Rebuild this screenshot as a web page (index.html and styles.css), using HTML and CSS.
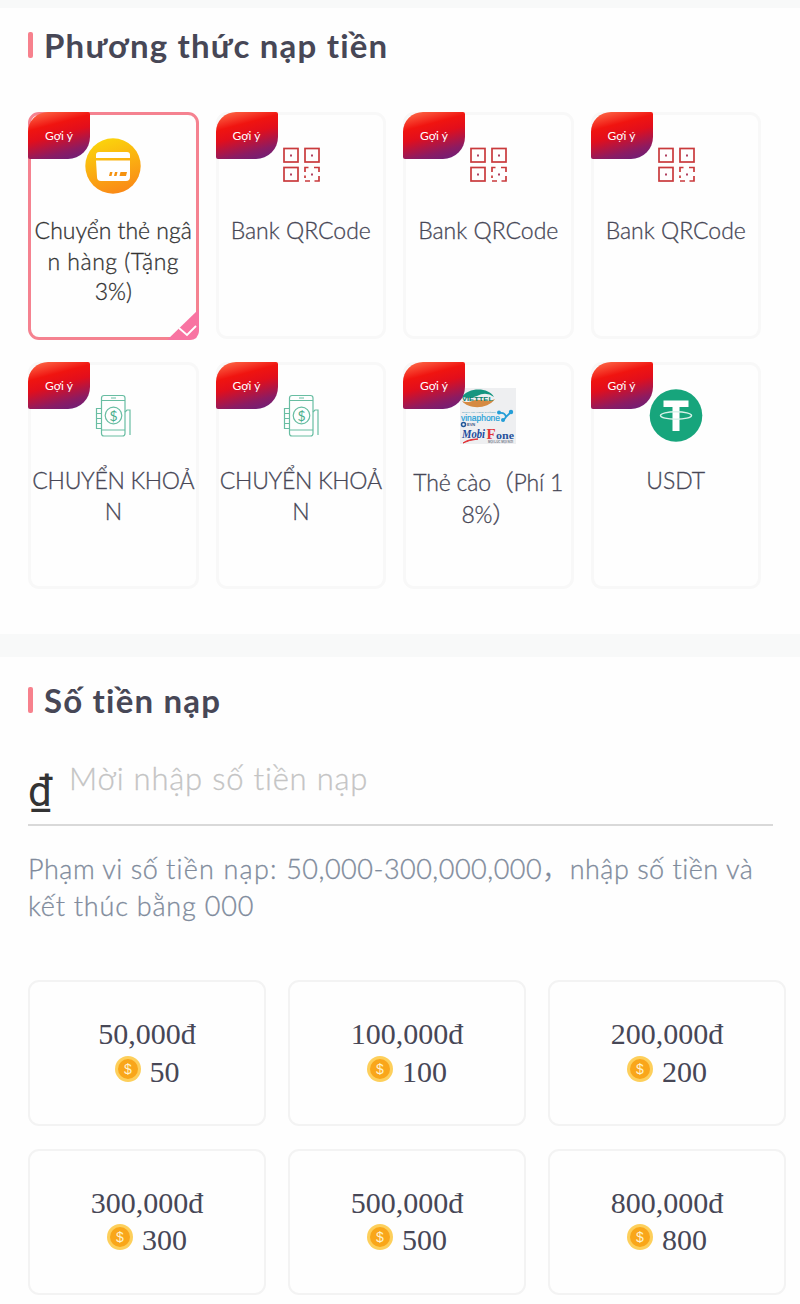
FILE: index.html
```html
<!DOCTYPE html>
<html lang="vi">
  <head>
    <meta charset="UTF-8" />
    <title>Nạp tiền</title>
    <link rel="stylesheet" href="styles.css">
  </head>
  <body>
    <!-- Shared icons -->
    <svg class="sprite" width="0" height="0">
      <symbol id="qr" viewBox="0 0 56 56">
        <g fill="none" stroke="#c93a3c" stroke-width="1.7">
          <rect x="11" y="10.5" width="14" height="13.5" />
          <rect x="32" y="10.5" width="14" height="13.5" />
          <rect x="11" y="29.5" width="14" height="13.5" />
          <path d="M32 34v-4.500h3.500M41 29.500h5v4.500M32 37.500v2.500M32 43h5M41.500 43h4.500v-5" />
        </g>
        <g fill="#b04060">
          <rect x="17" y="16.500" width="2" height="2" />
          <rect x="38" y="16.500" width="2" height="2" />
          <rect x="17" y="35.500" width="2" height="2" />
          <rect x="38" y="35.500" width="2" height="2" />
        </g>
      </symbol>
      <symbol id="phone" viewBox="0 0 56 56">
        <g fill="none" stroke="#68bda2" stroke-width="1.200">
          <rect x="16.500" y="7.500" width="23.500" height="40.500" rx="2.500" />
          <path d="M16.500 12.500H40M16.500 42H40M26 10h5M16.500 20.500h-5v20h5M11.500 25.500h5M11.500 30.500h5M11.500 35.500h5M40 24l2-2h3v25" />
          <circle cx="28.500" cy="27.500" r="8.300" />
        </g>
        <text x="28.500" y="32.500" text-anchor="middle" font-family="Lato, sans-serif" font-size="14" fill="#48ad8b">$</text>
      </symbol>
      <symbol id="coin" viewBox="0 0 26 26">
        <circle cx="13" cy="13" r="13" fill="#fdcf5b" />
        <circle cx="13" cy="13" r="10" fill="#f9a61a" />
        <text x="13" y="18" text-anchor="middle" font-family="Liberation Sans, sans-serif" font-size="14" fill="#fff3cf">$</text>
      </symbol>
    </svg>

    <div class="section methods-section">
      <h2 class="title title-methods">Phương thức nạp tiền</h2>
      <div class="methods">
        <div class="method active">
          <span class="badge">Gợi ý</span>
          <svg class="icon" viewBox="0 0 56 56">
            <defs>
              <linearGradient id="gold" x1="0.300" y1="0" x2="0.600" y2="1">
                <stop offset="0" stop-color="#fbd50c" />
                <stop offset="1" stop-color="#fa8917" />
              </linearGradient>
            </defs>
            <circle cx="28" cy="28" r="27.700" fill="url(#gold)" />
            <path d="M14 14h28q3 0 3 3v3H11v-3q0-3 3-3z" fill="#fff" />
            <path d="M11 22.500h34V39q0 4-4 4H16q-4 0-4-4z" fill="#fff" />
            <path d="M25 34h2.500l-1 4H24zM30 34h2.500l-1 4H29zM35.500 34h6.500l-1 4h-6.500z" fill="#f5920f" />
          </svg>
          <p class="name">Chuyển thẻ ngâ<br><span class="wide">n hàng (Tặng</span><br>3%)</p>
          <svg class="check" viewBox="0 0 32 31">
            <path d="M32 0v21q0 10-10 10H0z" fill="#f874a2" />
            <path d="M12 19l8 7L29 17" fill="none" stroke="#fff" stroke-width="1.800" />
          </svg>
        </div>
        <div class="method">
          <span class="badge">Gợi ý</span>
          <svg class="icon"><use href="#qr" /></svg>
          <p class="name">Bank QRCode</p>
        </div>
        <div class="method">
          <span class="badge">Gợi ý</span>
          <svg class="icon"><use href="#qr" /></svg>
          <p class="name">Bank QRCode</p>
        </div>
        <div class="method">
          <span class="badge">Gợi ý</span>
          <svg class="icon"><use href="#qr" /></svg>
          <p class="name">Bank QRCode</p>
        </div>
        <div class="method">
          <span class="badge">Gợi ý</span>
          <svg class="icon"><use href="#phone" /></svg>
          <p class="name transfer">CHUYỂN KHOẢ<br>N</p>
        </div>
        <div class="method">
          <span class="badge">Gợi ý</span>
          <svg class="icon"><use href="#phone" /></svg>
          <p class="name transfer">CHUYỂN KHOẢ<br>N</p>
        </div>
        <div class="method">
          <span class="badge">Gợi ý</span>
          <svg class="icon" viewBox="0 0 56 56">
            <rect width="56" height="56" fill="#eeeff1" />
            <path d="M2 9C8-1 29-1 34 9q-8-6-17-1-6 3-15 1z" fill="#169680" />
            <path d="M2 13c6 8 25 9 33-2-7 4-13 0-20 1-5 2-8 3-13 1z" fill="#d58a42" />
            <g font-family="Liberation Sans, sans-serif" font-weight="bold">
              <text x="2" y="13" font-size="6" textLength="31" lengthAdjust="spacingAndGlyphs" fill="#087d68">VIETTEL</text>
              <text x="2" y="24.500" font-size="2.500" textLength="34" lengthAdjust="spacingAndGlyphs" fill="#6cadc5">DỊCH VỤ VIỄN THÔNG</text>
              <text x="1" y="32.500" font-size="8.500" font-weight="normal" stroke="#239fd7" stroke-width="0.200" textLength="39" lengthAdjust="spacingAndGlyphs" fill="#239fd7">vinaphone</text>
              <text x="7" y="38" font-size="4" fill="#385987">EVN</text>
              <text x="28" y="55" font-size="3" textLength="25" fill="#777b8c">MỌI LÚC MỌI NƠI</text>
            </g>
            <circle cx="3.500" cy="36.500" r="2" fill="none" stroke="#20579a" stroke-width="1.500" />
            <path d="M39 25q6-1 7 4l6-6M46 29l-3 4" fill="none" stroke="#249ed7" stroke-width="1.800" />
            <circle cx="39" cy="24.500" r="2" fill="#249ed7" />
            <circle cx="51" cy="24" r="2.200" fill="#249ed7" />
            <circle cx="43" cy="32" r="2" fill="#249ed7" />
            <g font-family="Liberation Serif, serif" font-weight="bold">
              <text x="2" y="50" font-size="12.500" font-style="italic" textLength="23" lengthAdjust="spacingAndGlyphs" fill="#20499b">Mobi</text>
              <text x="26.500" y="50.500" font-size="15" fill="#e23438">F</text>
              <text x="36" y="50.500" font-size="11" textLength="18" lengthAdjust="spacingAndGlyphs" fill="#27529c">one</text>
            </g>
            <path d="M3 55q5-4 15-4-9 1-15 4z" fill="#e23438" stroke="#e23438" />
          </svg>
          <p class="name scratch">Thẻ cào（Phí 1<br>8%）</p>
        </div>
        <div class="method">
          <span class="badge">Gợi ý</span>
          <svg class="icon" viewBox="0 0 56 56">
            <circle cx="28" cy="27.500" r="26.300" fill="#17a57c" />
            <path d="M15.500 12.500h25V19h-9v24h-7V19h-9z" fill="#fff" />
            <ellipse cx="28" cy="27.500" rx="15.500" ry="3.700" fill="none" stroke="#d8f1e9" stroke-width="1.500" />
          </svg>
          <p class="name">USDT</p>
        </div>
      </div>
    </div>

    <div class="section">
      <h2 class="title title-amount">Số tiền nạp</h2>
      <div class="field">
        <span class="currency">₫</span>
        <input class="amount-input" type="text" placeholder="Mời nhập số tiền nạp">
      </div>
      <p class="hint">Phạm vi số <span class="hint-wide">tiền nạp: </span>50,000-300,000,000，nhập số tiền và<br><span class="hint-last">kết thúc bằng 000</span></p>
      <div class="amounts">
        <div class="amount">
          <div>50,000đ</div>
          <div class="points"><svg class="coin"><use href="#coin" /></svg>50</div>
        </div>
        <div class="amount">
          <div>100,000đ</div>
          <div class="points"><svg class="coin"><use href="#coin" /></svg>100</div>
        </div>
        <div class="amount">
          <div>200,000đ</div>
          <div class="points"><svg class="coin"><use href="#coin" /></svg>200</div>
        </div>
        <div class="amount">
          <div>300,000đ</div>
          <div class="points"><svg class="coin"><use href="#coin" /></svg>300</div>
        </div>
        <div class="amount">
          <div>500,000đ</div>
          <div class="points"><svg class="coin"><use href="#coin" /></svg>500</div>
        </div>
        <div class="amount">
          <div>800,000đ</div>
          <div class="points"><svg class="coin"><use href="#coin" /></svg>800</div>
        </div>
      </div>
    </div>
  </body>
</html>
```
FILE: styles.css
```css
* {
  box-sizing: border-box;
}
body {
  margin: 0;
  padding-top: 8px;
  background: #f8f9f9;
  color: #474756;
  font-family: Lato, "Noto Sans CJK SC", sans-serif;
  overflow: hidden;
}
.sprite {
  position: absolute;
}
.section {
  background: #fefefe;
  padding: 17px 14px 20px 28px;
}
.methods-section {
  height: 626px;
  margin-bottom: 23px;
}
/* Section titles with the pink bar */
.title {
  display: flex;
  align-items: center;
  gap: 11px;
  margin: 0;
  height: 40px;
  font-size: 33px;
  font-weight: bold;
  white-space: nowrap;
}
.title::before {
  content: "";
  width: 5px;
  height: 26px;
  border-radius: 2px;
  background: #f7818d;
}
.title-methods {
  letter-spacing: 1.2px;
}
.title-amount {
  letter-spacing: 1.2px;
  margin-top: 6px;
}
/* Payment methods */
.methods {
  display: grid;
  grid-template-columns: repeat(4, 170.5px);
  grid-auto-rows: 227px;
  gap: 23px 17px;
  margin-top: 47px;
}
.method {
  position: relative;
  display: flex;
  flex-direction: column;
  align-items: center;
  padding-top: 23px;
  border: 3px solid #f8f8f8;
  border-radius: 11px;
}
.method.active {
  height: 228px;
  border-color: #f58290;
}
.badge {
  position: absolute;
  left: -3px;
  top: -3px;
  width: 62px;
  height: 47px;
  border-radius: 20px 2px 22px 2px;
  background: linear-gradient(165deg, #ff7650 0%, #f01410 30%, #e20e1c 48%, #8c1b62 78%, #65207f 100%);
  color: #fff;
  font-size: 12px;
  font-weight: normal;
  line-height: 47px;
  text-align: center;
}
.icon {
  width: 56px;
  height: 56px;
  flex: none;
}
.name {
  margin: 21px 0 0;
  font-size: 23px;
  font-weight: 300;
  line-height: 30.5px;
  text-align: center;
  white-space: nowrap;
  -webkit-text-stroke: 0.3px;
}
.active .name {
  color: #333;
}
.wide {
  letter-spacing: 0.5px;
}
.transfer {
  letter-spacing: -0.3px;
}
.scratch {
  margin-top: 22px;
  line-height: 32px;
  letter-spacing: -0.2px;
}
.check {
  position: absolute;
  right: -3px;
  bottom: -3px;
  width: 32px;
  height: 31px;
}
/* Amount input */
.field {
  display: flex;
  width: 745px;
  height: 83px;
  margin-top: 23px;
  border-bottom: 2px solid #d9d9d9;
}
.currency {
  width: 41px;
  padding-top: 24px;
  color: #333;
  font-family: Roboto, sans-serif;
  font-size: 42px;
  line-height: 50px;
}
.amount-input {
  width: 600px;
  height: 70px;
  padding: 0;
  border: none;
  outline: none;
  background: none;
  font-family: inherit;
  font-size: 31px;
  font-weight: 300;
  letter-spacing: 0.8px;
}
.amount-input::placeholder {
  color: #c4c4c4;
  -webkit-text-stroke: 0.3px;
}
.hint {
  margin: 24px 0 0;
  color: #808b9c;
  font-size: 27px;
  font-weight: 300;
  line-height: 37px;
  letter-spacing: 0.5px;
  white-space: nowrap;
  -webkit-text-stroke: 0.3px;
}
.hint-wide {
  letter-spacing: 1.2px;
}
.hint-last {
  letter-spacing: 0.8px;
}
/* Preset amounts */
.amounts {
  display: grid;
  grid-template-columns: repeat(3, 238px);
  grid-auto-rows: 146px;
  gap: 22.5px 22px;
  margin-top: 56px;
}
.amount {
  padding-top: 33px;
  border: 2px solid #f3f3f3;
  border-radius: 11px;
  font-family: "Liberation Serif", serif;
  font-size: 30px;
  line-height: 37.5px;
  text-align: center;
}
.points {
  display: flex;
  justify-content: center;
  gap: 9px;
}
.coin {
  width: 26px;
  height: 26px;
  margin-top: 3px;
}
```
